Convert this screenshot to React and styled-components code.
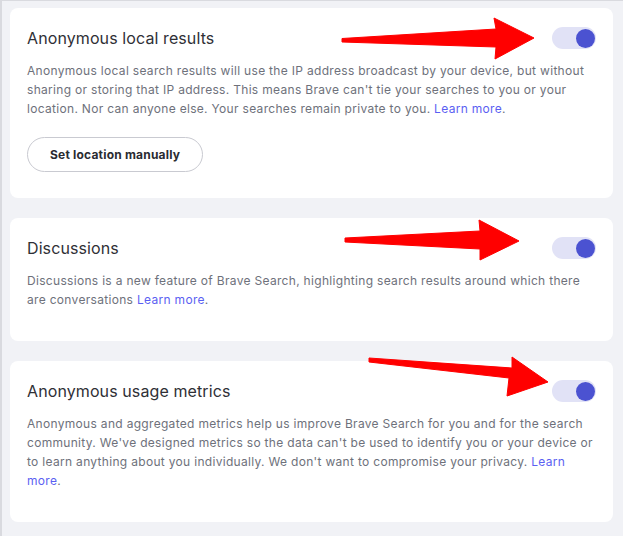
import React from 'react'
import styled, { createGlobalStyle } from 'styled-components';

const Global = createGlobalStyle`
    html, body {
        margin: 0;
        padding: 0;
        background: #f1f2f6;
    }
    * { box-sizing: border-box; }
`;

const Page = styled.div`
    position: relative;
    width: 623px;
    height: 536px;
    overflow: hidden;
    background: #f1f2f6;
    border-left: 2px solid #d9dadf;
    border-top: 1px solid #d9dadf;
    padding: 7px 10px 0 8px;
    display: flex;
    flex-direction: column;
    gap: 20px;
    font-family: Inter, "Open Sans", sans-serif;
`;

const Card = styled.section`
    background: #ffffff;
    border-radius: 8px;
    padding: 19px 17px 26px 17px;
`;

const Head = styled.div`
    display: flex;
    justify-content: space-between;
    align-items: center;
    height: 22px;
`;

const Title = styled.h2`
    margin: 0;
    font-size: 16px;
    font-weight: 400;
    color: #2f3036;
    letter-spacing: 0.1px;
`;

const Track = styled.div`
    width: 44px;
    height: 22px;
    border-radius: 11px;
    background: #e1e2f6;
    display: flex;
    align-items: center;
    justify-content: ${p => (p.on ? 'flex-end' : 'flex-start')};
    padding: 0 1px;
`;

const Knob = styled.div`
    width: 19px;
    height: 19px;
    border-radius: 50%;
    background: #4b52d1;
`;

const Text = styled.p`
    margin: 12px 0 6px 0;
    font-size: 12px;
    line-height: 19px;
    color: #6e717b;
    letter-spacing: 0.31px;
`;

const Link = styled.a`
    color: #5b5ff2;
    text-decoration: none;
`;

const Button = styled.button`
    margin-top: 13px;
    height: 35px;
    padding: 0 22px;
    border-radius: 18px;
    border: 1px solid #c9cad1;
    background: #fff;
    font-family: Inter, sans-serif;
    font-size: 12px;
    font-weight: 700;
    letter-spacing: 0.2px;
    color: #2a2b31;
`;

const Overlay = styled.svg`
    position: absolute;
    left: 0;
    top: 0;
    pointer-events: none;
`;

function Toggle({ on }) {
    return (
        <Track on={on ? 1 : 0}>
            <Knob />
        </Track>
    )
}

function Setting({ title, children, action }) {
    return (
        <Card>
            <Head>
                <Title>{title}</Title>
                <Toggle on />
            </Head>
            <Text>{children}</Text>
            {action}
        </Card>
    )
}

function App() {
    return (
        <Page>
            <Global />
            <Setting
                title="Anonymous local results"
                action={<Button>Set location manually</Button>}
            >
                Anonymous local search results will use the IP address broadcast by your device, but without
                sharing or storing that IP address. This means Brave can't tie your searches to you or your
                location. Nor can anyone else. Your searches remain private to you. <Link href="#">Learn more</Link>.
            </Setting>
            <Setting title="Discussions">
                Discussions is a new feature of Brave Search, highlighting search results around which there
                are conversations <Link href="#">Learn more</Link>.
            </Setting>
            <Setting title="Anonymous usage metrics">
                Anonymous and aggregated metrics help us improve Brave Search for you and for the search
                community. We've designed metrics so the data can't be used to identify you or your device or
                to learn anything about you individually. We don't want to compromise your privacy. <Link href="#">Learn more</Link>.
            </Setting>
            <Overlay width="623" height="536" viewBox="0 0 623 536">
                <polygon fill="#ff0000" strokeLinejoin="round" stroke="#ff0000" strokeWidth="1"
                    points="340,37.5 494,28 492,17 532,37 493,58 494,46 340,41" />
                <polygon fill="#ff0000" strokeLinejoin="round" stroke="#ff0000" strokeWidth="1"
                    points="343,237 478,230 477,219 517,240 478,259 478,248 343,241" />
                <polygon fill="#ff0000" strokeLinejoin="round" stroke="#ff0000" strokeWidth="1"
                    points="367,357 510,367 510,356 546,381 505,395 507,377 367,361" />
            </Overlay>
        </Page>
    )
}

export default App
